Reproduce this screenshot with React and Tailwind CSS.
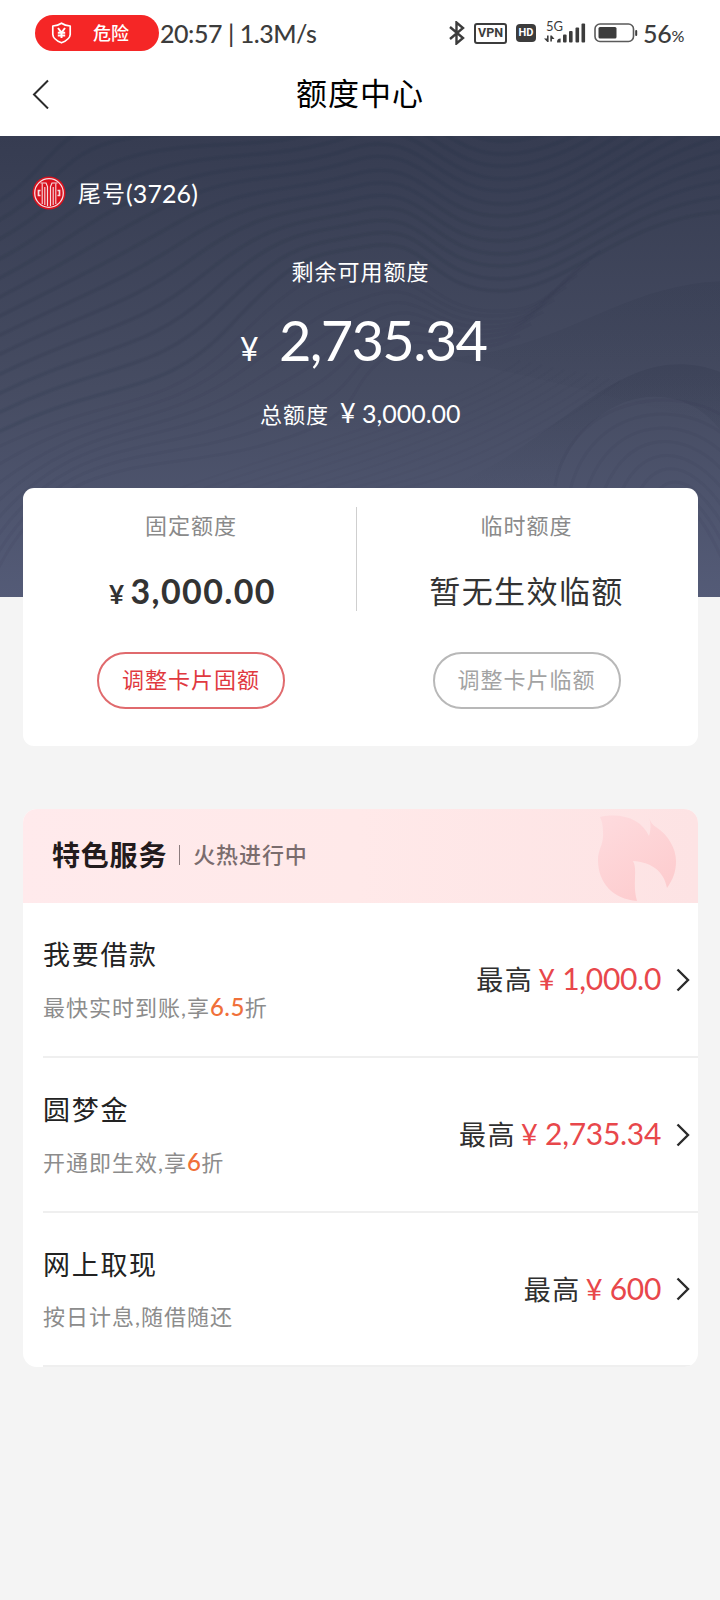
import React from 'react';
import clsx from 'clsx';

const services = [
  { name: '我要借款', before: '最快实时到账,享', discount: '6.5', after: '折', amount: '1,000.0' },
  { name: '圆梦金', before: '开通即生效,享', discount: '6', after: '折', amount: '2,735.34' },
  { name: '网上取现', before: '按日计息,随借随还', discount: '', after: '', amount: '600' },
];

// Blend two smooth curves (start, two controls, then control/end pairs) into n contour lines
const contours = (a, b, n) =>
  Array.from({ length: n }, (_, i) => {
    const p = a.map((v, k) => Math.round(v + ((b[k] - v) * i) / (n - 1)));
    let d = `M${p[0]} ${p[1]}C${p.slice(2, 8).join(' ')}`;
    for (let k = 8; k < p.length; k += 4) {
      d += `S${p.slice(k, k + 4).join(' ')}`;
    }
    return d;
  });

const upper = contours(
  [-10, 70, 50, 40, 50, -10, 120, -15, 260, -5, 340, -35, 440, 10, 510, 5, 650, -60, 730, -110],
  [-10, 300, 110, 240, 160, 265, 230, 190, 310, 120, 370, 110, 430, 155, 500, 155, 620, 80, 730, 75],
  13
);
const lower = contours(
  [-10, 315, 110, 255, 160, 280, 235, 205, 320, 140, 370, 132, 430, 172, 490, 175, 550, 150, 600, 115],
  [-10, 450, 50, 310, 150, 340, 260, 310, 340, 260, 380, 225, 430, 215, 470, 212, 500, 205, 520, 200],
  8
);
const hill = contours(
  [555, 350, 570, 260, 680, 245, 730, 285],
  [660, 470, 670, 340, 690, 350, 730, 440],
  9
);
const ripples = contours(
  [180, 352, 330, 300, 460, 270, 520, 225],
  [400, 352, 470, 340, 560, 290, 620, 245],
  10
);

const Waves = () => (
  <svg className="absolute inset-0 h-full w-full" viewBox="0 0 720 461" fill="none">
    <defs>
      <linearGradient id="ridge" x1="0" y1="0" x2="0" y2="1">
        <stop offset="0" stopColor="#2c3348" stopOpacity="0.4" />
        <stop offset="1" stopColor="#2c3348" stopOpacity="0" />
      </linearGradient>
    </defs>
    <path d="M440 222C560 218 620 145 730 145V290C640 270 560 245 440 222Z" fill="url(#ridge)" opacity="0.5" />
    <path d="M440 352C560 315 620 190 730 240V310C690 230 580 250 555 352Z" fill="url(#ridge)" opacity="0.6" />
    <g stroke="#272e43">
      <g strokeWidth="5" strokeOpacity="0.06">
        {upper.map((d) => (
          <path key={d} d={d} />
        ))}
      </g>
      <g strokeWidth="2.5" strokeOpacity="0.1">
        {upper.map((d) => (
          <path key={d} d={d} />
        ))}
      </g>
      <g strokeWidth="3" strokeOpacity="0.07">
        {[...lower, ...hill].map((d) => (
          <path key={d} d={d} />
        ))}
      </g>
      <g strokeWidth="2" strokeOpacity="0.04">
        {ripples.map((d) => (
          <path key={d} d={d} />
        ))}
      </g>
    </g>
  </svg>
);

const BankLogo = () => (
  <svg className="h-[34px] w-[34px]" viewBox="0 0 34 34" fill="none">
    <circle cx="17" cy="17" r="16.5" fill="#d9121e" />
    <circle cx="17" cy="17" r="14.3" stroke="#f6dde1" strokeWidth="1.3" />
    <path d="M8.500 7h5.500l1.500 3.500V30M25.500 7H20l-1.500 3.500V30" stroke="#f6dde1" strokeWidth="1.200" />
    <path d="M10.200 7.500V28M12.800 11v18M23.800 7.500V28M21.200 11v18" stroke="#f6dde1" strokeWidth="1.100" />
    <path d="M8.500 14.500H6.500v5h2M25.500 14.500h2v5h-2" stroke="#f6dde1" strokeWidth="1.700" />
  </svg>
);

const StatusBar = () => (
  <div className="flex h-[66px] items-center pl-[35px] text-[#3c3c3c]">
    <div className="flex h-[36px] w-[124px] items-center rounded-full bg-[#f52626] pl-[16px] text-white">
      <svg className="h-[22px] w-[21px]" viewBox="0 0 21 22" fill="none" stroke="currentColor">
        <path d="M10.5 1.2C8 3 5 3.8 1.8 4v8.500C2 16.500 6 19 10.500 20.800 15 19 19 16.500 19.200 12.500V4C16 3.800 13 3 10.500 1.200Z" strokeWidth="1.7" strokeLinejoin="round" />
        <path d="M7 6l3.500 4.500L14 6M10.500 10.500V16M6.800 10.800h7.400M6.800 13.500h7.400" strokeWidth="2" />
      </svg>
      <span className="ml-[21px] text-[18px] leading-[22px] font-medium">危险</span>
    </div>
    <span className="ml-px w-[160px] text-[25px] leading-[30px] font-medium tracking-[-0.450px] whitespace-nowrap">20:57 | 1.3M/s</span>

    <svg className="ml-[129px] h-[24px] w-[16px]" viewBox="0 0 16 24" fill="none" stroke="currentColor" strokeWidth="2.400">
      <path d="M1 6l13 11-6.500 5.500V1.500L14 7 1 18" />
    </svg>
    <div className="ml-[9px] flex h-[21px] w-[33px] items-center justify-center rounded-[3px] border-[2.500px] border-[#3c3c3c] font-['Roboto'] text-[12.500px] leading-[12px] font-bold">VPN</div>
    <div className="ml-[9px] flex h-[18px] w-[20px] items-center justify-center rounded-[4px] bg-[#3c3c3c] font-['Roboto'] text-[11px] leading-[12px] font-bold text-white">HD</div>
    <div className="ml-[8px] flex h-[24px] w-[43px] flex-col">
      <span className="h-[9px] pl-[2px] text-[13px] leading-[11px]">5G</span>
      <svg className="-mt-[7px] h-[20px] w-[43px]" viewBox="0 0 43 20" fill="currentColor">
        <path d="M3 12.500h1.600V19H3.400L0 15.500h3zM6.300 12.500h1.400L10.500 16H7.900v2.500H6.300z" />
        <path d="M13 19.500a3.800 3.800 0 0 1 3.600-4V19.500z" />
        <rect x="19" y="11.500" width="3.600" height="8" rx="1" />
        <rect x="25" y="8" width="3.600" height="11.500" rx="1" />
        <rect x="31.500" y="4.500" width="3.600" height="15" rx="1" />
        <rect x="37.500" y="0.500" width="3.600" height="19" rx="1" />
      </svg>
    </div>
    <svg className="ml-[7px] h-[20px] w-[44px]" viewBox="0 0 44 20" fill="none">
      <rect x="1" y="1" width="38.500" height="17.500" rx="5" stroke="#5a5a5a" strokeWidth="1.600" />
      <rect x="4.500" y="4" width="18" height="11.500" rx="1.500" fill="currentColor" />
      <path d="M42.200 8v4" stroke="currentColor" strokeWidth="2" strokeLinecap="round" />
    </svg>
    <span className="ml-[5px] text-[25px] leading-[30px] font-medium tracking-[-0.300px]">56</span>
    <span className="mt-[6px] text-[16px] leading-[20px] font-medium">%</span>
  </div>
);

const Header = () => (
  <header className="flex h-[70px] items-center">
    <svg className="mb-[15px] ml-[31px] h-[30px] w-[19px]" viewBox="0 0 19 30" fill="none" stroke="#2b2b2b" strokeWidth="2">
      <path d="M17 1.500L3 15.500l14 14" />
    </svg>
    <h1 className="mb-[16px] ml-[246px] text-[31px] leading-[40px] tracking-[1px] text-black">额度中心</h1>
  </header>
);

const Hero = () => (
  <section className="relative h-[461px] bg-linear-to-b from-[#363c51] via-[#464c62] via-55% to-[#545b77]">
    <Waves />
    <div className="relative flex flex-col text-white">
      <div className="mt-[40px] flex h-[34px] items-center pl-[32px]">
        <BankLogo />
        <span className="ml-[12px] text-[23px] leading-[34px] tracking-[1px]">尾号</span>
        <span className="text-[25px] leading-[34px] tracking-[0.100px]">(3726)</span>
      </div>
      <p className="mt-[47px] pl-px text-center text-[22px] leading-[30px] tracking-[1px]">剩余可用额度</p>
      <div className="mt-[21px] flex h-[64px] items-baseline pl-[240px]">
        <span className="w-[39px] text-[32px]">¥</span>
        <span className="text-[56px] leading-[64px] tracking-[-1.700px]">2,735.34</span>
      </div>
      <div className="mt-[26px] flex h-[30px] items-baseline pl-[260px] text-[25px] leading-[30px]">
        <span className="w-[80px] text-[22px] tracking-[1px]">总额度</span>
        <span className="w-[22px] text-[27px]">¥</span>
        <span>3,000.00</span>
      </div>
    </div>
  </section>
);

const LimitCard = () => (
  <section className="relative mr-[22px] ml-[23px] -mt-[109px] flex h-[258px] rounded-[11px] bg-white">
    <div className="flex w-[333px] flex-col items-center pl-[3px]">
      <p className="mt-[23px] text-[22px] leading-[30px] tracking-[1px] text-[#8a8a8a]">固定额度</p>
      <div className="mt-[28px] flex h-[44px] w-[170px] items-baseline pl-[3px] font-bold text-[#333333]">
        <span className="w-[24px] text-[26px]">¥</span>
        <span className="text-[34px] leading-[44px] tracking-[1.400px]">3,000.00</span>
      </div>
      <button className="mt-[39px] h-[57px] w-[188px] rounded-full border-2 border-[#e06a6d] pb-[2px] text-[22px] tracking-[1px] text-[#e0393f]">调整卡片固额</button>
    </div>
    <div className="mt-[19px] h-[104px] w-px bg-[#cfcfcf]" />
    <div className="flex flex-1 flex-col items-center pr-[2px]">
      <p className="mt-[23px] text-[22px] leading-[30px] tracking-[1px] text-[#8a8a8a]">临时额度</p>
      <p className="mt-[28px] h-[46px] text-[31px] leading-[44px] tracking-[1.400px] text-[#333333]">暂无生效临额</p>
      <button className="mt-[37px] h-[57px] w-[188px] rounded-full border-2 border-[#b8b8b8] pb-[2px] text-[22px] tracking-[1px] text-[#a3a3a3]">调整卡片临额</button>
    </div>
  </section>
);

const ServiceRow = ({ item, last }) => (
  <div className={clsx('ml-[20px] flex items-center border-b-2 border-[#efefef]', last ? 'h-[154px]' : 'h-[155px]')}>
    <div className="flex-1 pt-[2px]">
      <p className="text-[27px] leading-[36px] tracking-[1.700px] text-[#222222]">{item.name}</p>
      <p className="mt-[17px] text-[22px] leading-[34px] tracking-[1px] text-[#8c8c8c]">
        {item.before}
        {item.discount && <span className="text-[24px] font-medium tracking-[0.400px] text-[#f0703a]">{item.discount}</span>}
        {item.after}
      </p>
    </div>
    <div className="flex items-baseline pr-[15px] pb-px text-[30px] leading-[36px] text-[#e8474b]">
      <span className="text-[27px] tracking-[1.500px] text-[#2f2f2f]">最高</span>
      <span className="ml-[5px] w-[24px] text-[29px]">¥</span>
      <span className="tracking-[-0.300px]">{item.amount}</span>
    </div>
    <svg className="mr-[8px] h-[24px] w-[14px]" viewBox="0 0 14 24" fill="none" stroke="#2b2b2b" strokeWidth="2.400">
      <path d="M1.500 1.500L12 12 1.500 22.500" />
    </svg>
  </div>
);

const Flame = () => (
  <svg className="h-[87px] w-[79px]" viewBox="0 0 79 87">
    <defs>
      <linearGradient id="flame" x1="0.200" y1="0" x2="0.800" y2="1">
        <stop offset="0" stopColor="#fedadd" />
        <stop offset="1" stopColor="#fdcbcd" />
      </linearGradient>
    </defs>
    <path d="M2 2C25-3 44 5 51 21 53 14 53 8 51 3 53 8 55 10 58 12 70 20 78 33 78 46 78 57 75 64 69 73 66 56 53 47 35 46 40 55 34 69 39 86 15 84 0 68 0 45 0 34 6 30 5 17 5 11 4 6 2 2Z" fill="url(#flame)" />
  </svg>
);

const Services = () => (
  <section className="mt-[63px] mr-[22px] ml-[23px] h-[558px] overflow-hidden rounded-[14px] bg-white">
    <div className="flex h-[94px] items-center bg-linear-to-r from-[#ffeaec] via-[#ffe9e9] to-[#fde3e4] pl-[29px]">
      <h2 className="mb-[3px] text-[28px] leading-[40px] font-bold tracking-[0.800px] text-[#231b1c]">特色服务</h2>
      <div className="mb-[3px] ml-[12px] h-[20px] w-px bg-[#8b7b7d]" />
      <span className="mb-[3px] ml-[13px] flex-1 text-[22px] leading-[30px] font-medium tracking-[0.900px] text-[#7a6c6d]">火热进行中</span>
      <div className="mt-[5px] mr-[21px]">
        <Flame />
      </div>
    </div>
    {services.map((item, i) => (
      <ServiceRow key={item.name} item={item} last={i === services.length - 1} />
    ))}
  </section>
);

const App = () => (
  <div className="min-h-[1600px] w-[720px] bg-[#f4f4f4] font-['Lato','Noto_Sans_CJK_SC',sans-serif]">
    <div className="bg-white">
      <StatusBar />
      <Header />
    </div>
    <Hero />
    <LimitCard />
    <Services />
  </div>
);

export default App;
